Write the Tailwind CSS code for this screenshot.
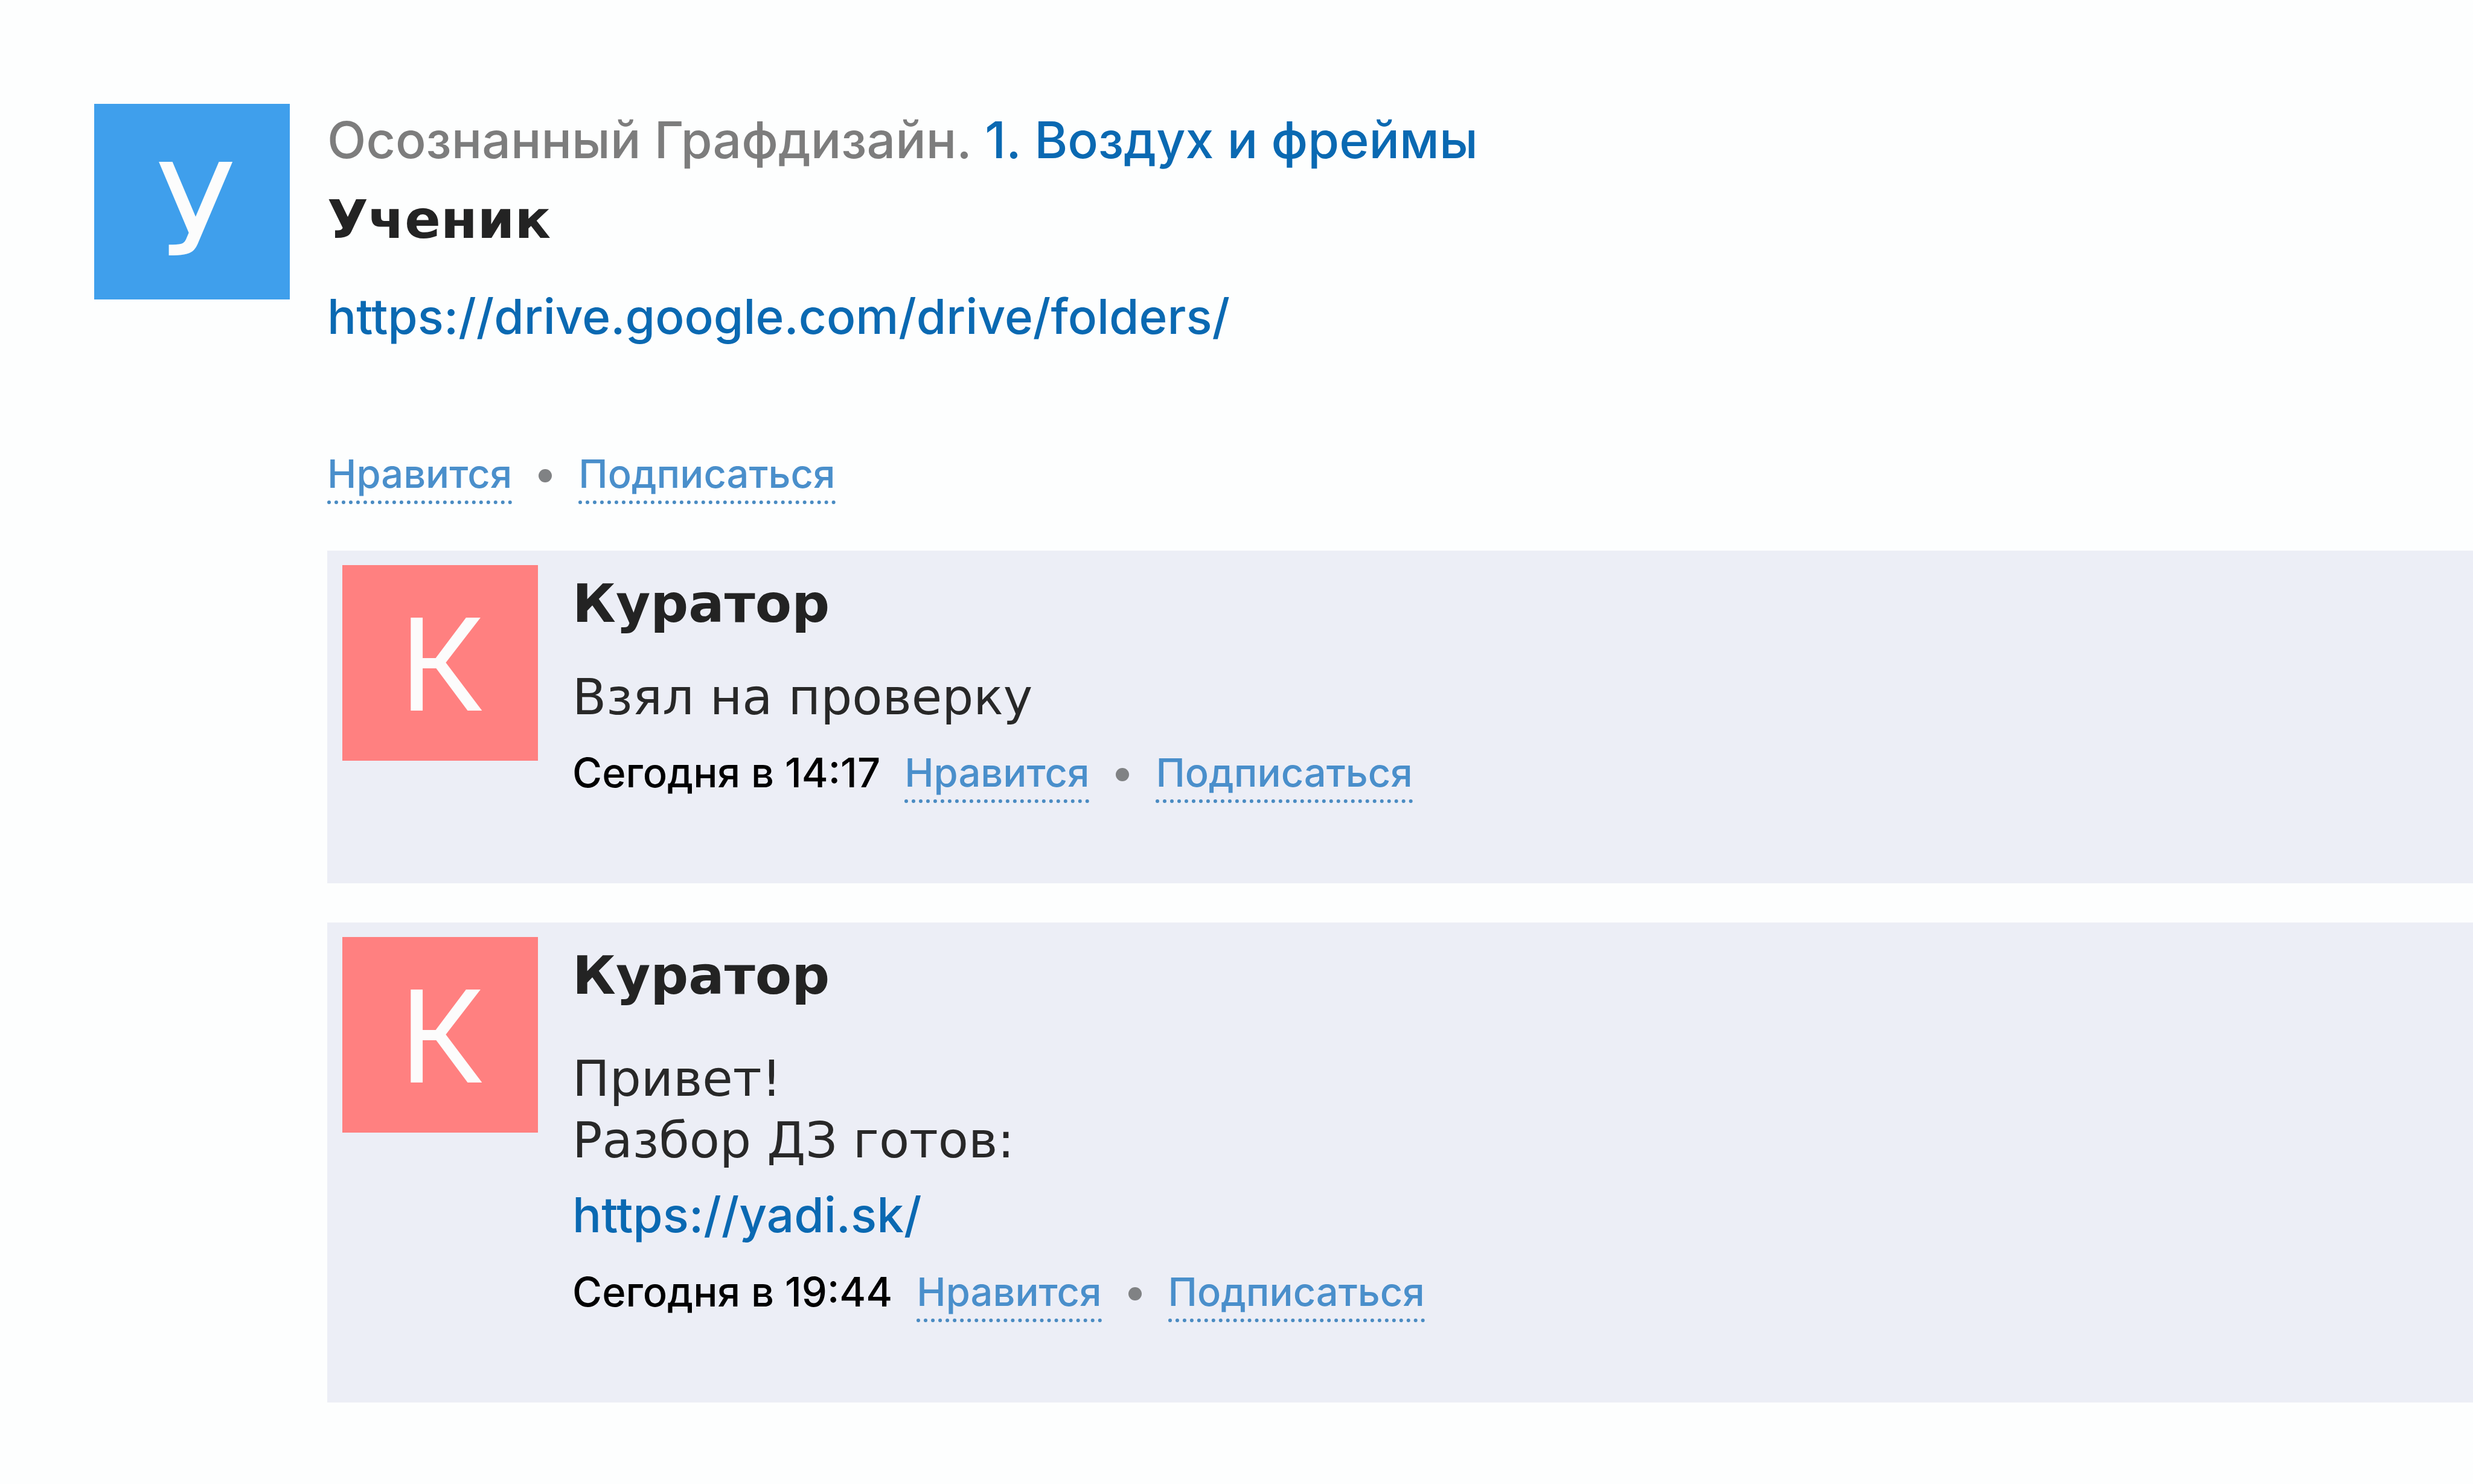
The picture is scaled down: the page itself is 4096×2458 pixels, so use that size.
<!DOCTYPE html>
<html lang="ru">
<head>
<meta charset="utf-8">
<meta name="viewport" content="width=device-width, initial-scale=1">
<title>Осознанный Графдизайн</title>
<script src="https://cdn.jsdelivr.net/npm/@tailwindcss/browser@4"></script>
</head>
<body class="min-h-screen bg-[#fdfefe] font-['Inter',sans-serif] text-[#232323]">
<main class="pt-[172px] pl-[156px]">
  <article class="flex items-start gap-[62px]">
    <div class="flex size-[324px] shrink-0 items-center justify-center bg-[#3f9fec] pt-8 pl-3 font-['DejaVu_Sans',sans-serif] text-[212px] leading-none text-[#fcfcfc]">У</div>
    <div class="min-w-0 flex-1">
      <p class="text-[84px] leading-[120px] font-medium text-[#7d7d7d]">Осознанный Графдизайн. <a href="#lesson" class="text-[#0a69b2]">1. Воздух и фреймы</a></p>
      <h1 class="mt-2 font-['DejaVu_Sans',sans-serif] text-[88px] leading-[128px] font-bold">Ученик</h1>
      <p class="mt-9 text-[80px] leading-[120px] font-medium"><a href="#folders" class="text-[#0a69b2]">https://drive.google.com/drive/folders/</a></p>
      <div class="mt-[157px] flex items-center text-[65px] leading-[88px] font-medium text-[#4a8fcb]">
        <button type="button" class="border-b-6 border-dotted border-[#4a8bc2]">Нравится</button>
        <span class="mx-11 size-[22px] rounded-full bg-[#808284]"></span>
        <button type="button" class="border-b-6 border-dotted border-[#4a8bc2]">Подписаться</button>
      </div>

      <div class="mt-[77px] flex flex-col gap-[65px]">
        <section class="flex items-start gap-[57px] bg-[#eceef6] pt-6 pb-[133px] pl-[25px]">
          <div class="flex size-[324px] shrink-0 items-center justify-center bg-[#ff8080] pt-1 pl-2 text-[212px] leading-none text-[#fcfcfc]">К</div>
          <div class="min-w-0 flex-1">
            <h2 class="font-['DejaVu_Sans',sans-serif] text-[88px] leading-[128px] font-bold">Куратор</h2>
            <p class="mt-10 font-['DejaVu_Sans',sans-serif] text-[82px] leading-[102px] text-[#282828]">Взял на проверку</p>
            <div class="mt-[30px] flex items-center text-[65px] leading-[88px] font-medium text-[#4a8fcb]">
              <time class="mr-10 border-b-6 border-transparent text-[67px] text-black">Сегодня в 14:17</time>
              <button type="button" class="border-b-6 border-dotted border-[#4a8bc2]">Нравится</button>
              <span class="mx-11 size-[22px] rounded-full bg-[#808284]"></span>
              <button type="button" class="border-b-6 border-dotted border-[#4a8bc2]">Подписаться</button>
            </div>
          </div>
        </section>

        <section class="flex items-start gap-[57px] bg-[#eceef6] pt-6 pb-[133px] pl-[25px]">
          <div class="flex size-[324px] shrink-0 items-center justify-center bg-[#ff8080] pt-1 pl-2 text-[212px] leading-none text-[#fcfcfc]">К</div>
          <div class="min-w-0 flex-1">
            <h2 class="font-['DejaVu_Sans',sans-serif] text-[88px] leading-[128px] font-bold">Куратор</h2>
            <p class="mt-14 font-['DejaVu_Sans',sans-serif] text-[82px] leading-[102px] text-[#282828]">Привет!<br>Разбор ДЗ готов:</p>
            <p class="mt-3 text-[80px] leading-[120px] font-medium"><a href="#review" class="text-[#0a69b2]">https://yadi.sk/</a></p>
            <div class="mt-6 flex items-center text-[65px] leading-[88px] font-medium text-[#4a8fcb]">
              <time class="mr-10 border-b-6 border-transparent text-[67px] text-black">Сегодня в 19:44</time>
              <button type="button" class="border-b-6 border-dotted border-[#4a8bc2]">Нравится</button>
              <span class="mx-11 size-[22px] rounded-full bg-[#808284]"></span>
              <button type="button" class="border-b-6 border-dotted border-[#4a8bc2]">Подписаться</button>
            </div>
          </div>
        </section>
      </div>
    </div>
  </article>
</main>
</body>
</html>
